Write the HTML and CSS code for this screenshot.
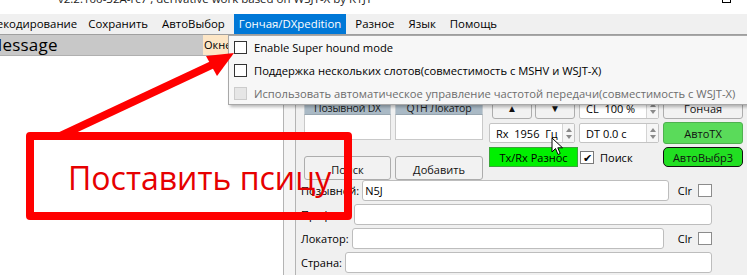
FILE: index.html
```html
<!DOCTYPE html>
<html lang="ru">
<head>
<meta charset="utf-8">
<title>JTDX</title>
<link rel="stylesheet" href="styles.css">
</head>
<body>
<div class="titlebar">
  <span class="title-text">v2.2.100-32A-rc7 , derivative work based on WSJT-X by K1JT</span>
  <span class="max-btn"></span>
</div>
<div class="menubar">
  <span class="mi mi-first">Декодирование</span>
  <span class="mi">Сохранить</span>
  <span class="mi">АвтоВыбор</span>
  <span class="mi mi-active">Гончая/DXpedition</span>
  <span class="mi">Разное</span>
  <span class="mi">Язык</span>
  <span class="mi">Помощь</span>
</div>
<div class="main">
  <div class="leftpane">
    <div class="msg-head">
      <div class="msg-cell"><span class="msg-text">Message</span></div>
      <div class="win-cell">Окне</div>
    </div>
  </div>
  <div class="strip"></div>
  <div class="panel">
    <div class="top">
      <div class="lblock">
        <div class="hdr">Позывной DX</div>
        <div class="hdr">QTH Локатор</div>
        <div class="field"></div>
        <div class="field"></div>
        <div class="btn btn-low">Поиск</div>
        <div class="btn btn-low">Добавить</div>
      </div>
      <div class="rblock">
        <div class="arrows">
          <div class="btn arr">&#9650;</div>
          <div class="btn arr">&#9660;</div>
        </div>
        <div class="spin"><span class="spin-val">CL&nbsp;&nbsp;100 %</span><span class="spin-arr"><i class="up"></i><i class="dn"></i></span></div>
        <div class="btn">Гончая</div>
        <div class="spin spin-r2"><span class="spin-val">Rx&nbsp;&nbsp;1956&nbsp;&nbsp;Гц</span><span class="spin-arr"><i class="up"></i><i class="dn"></i></span></div>
        <div class="spin spin-r2"><span class="spin-val">DT 0.0 с</span><span class="spin-arr"><i class="up"></i><i class="dn"></i></span></div>
        <div class="btn btn-green">АвтоTX</div>
        <div class="btn-bright">Tx/Rx Разнос</div>
        <div class="chk-row"><span class="chk chk-on">&#10004;</span><span>Поиск</span></div>
        <div class="btn btn-auto">АвтоВыбр3</div>
      </div>
    </div>
    <div class="form">
      <div class="frow"><span class="flabel">Позывной:</span><div class="finput">N5J</div><span class="clr">Clr</span><span class="chk"></span></div>
      <div class="frow"><span class="flabel">Префикс:</span><div class="finput"></div></div>
      <div class="frow"><span class="flabel">Локатор:</span><div class="finput finput-short"></div><span class="clr">Clr</span><span class="chk"></span></div>
      <div class="frow"><span class="flabel">Страна:</span><div class="finput"></div></div>
    </div>
  </div>
</div>

<div class="dropdown">
  <div class="ditem"><span class="dchk"></span><span>Enable Super hound mode</span></div>
  <div class="ditem"><span class="dchk"></span><span>Поддержка нескольких слотов(совместимость с MSHV и WSJT-X)</span></div>
  <div class="ditem ditem-off"><span class="dchk"></span><span>Использовать автоматическое управление частотой передачи(совместимость с WSJT-X)</span></div>
</div>

<svg class="cursor" width="14" height="19" viewBox="0 0 14 19">
  <path d="M1 1 L1 15 L4.5 11.5 L7 17.5 L9.2 16.5 L6.8 10.8 L11.5 10.8 Z" fill="#fff" stroke="#000" stroke-width="1" stroke-linejoin="round"/>
</svg>

<svg class="arrow" width="747" height="275" viewBox="0 0 747 275">
  <line x1="60" y1="136" x2="216" y2="63" stroke="#ff0000" stroke-width="8"/>
  <polygon points="234,53 206,56 217,76" fill="#ff0000"/>
</svg>
<div class="callout"><span class="callout-text">Поставить псицу</span></div>
</body>
</html>
```
FILE: styles.css
```css
* { box-sizing: border-box; }
html, body { margin: 0; padding: 0; }
body {
  width: 747px;
  height: 275px;
  overflow: hidden;
  position: relative;
  background: #fff;
  font-family: "Open Sans", "Noto Sans", sans-serif;
  font-size: 11px;
  color: #000;
}
.titlebar {
  height: 14px;
  overflow: hidden;
  display: flex;
  background: #fff;
  padding-left: 58px;
}
.title-text {
  display: block;
  margin-top: -9px;
  line-height: 16px;
  font-size: 11.5px;
  color: #222;
  white-space: nowrap;
}
.max-btn {
  margin-left: auto;
  margin-right: 16px;
  margin-top: -7px;
  width: 9px;
  height: 10px;
  border: 1px solid #000;
}
.menubar {
  height: 21px;
  background: #f0f0f0;
  border-bottom: 1px solid #a0a0a0;
  display: flex;
  white-space: nowrap;
  overflow: hidden;
  font-size: 11.4px;
}
.mi {
  line-height: 20px;
  padding: 0 7px;
}
.mi-first { margin-left: -18px; padding-right: 4px; }
.mi-active {
  background: #0078d7;
  color: #fff;
  padding: 0 5px;
  margin: 0 2px;
}
.main {
  display: flex;
  height: 240px;
}
.leftpane {
  width: 283px;
  background: #fff;
  overflow: hidden;
}
.msg-head {
  display: flex;
  height: 21px;
  border-bottom: 1px solid #b0b0b0;
}
.msg-cell {
  width: 203px;
  background: #c8c8c8;
  overflow: hidden;
}
.msg-text {
  display: block;
  margin-left: -13px;
  font-size: 17px;
  line-height: 20px;
  letter-spacing: 0.2px;
}
.win-cell {
  flex: 1;
  background: #fde6c6;
  line-height: 20px;
  font-size: 11px;
  padding-left: 1px;
}
.strip {
  width: 12px;
  background: #f4f4f4;
  border-left: 1px solid #b4b4b4;
}
.panel {
  flex: 1;
  background: #f0f0f0;
  border-left: 1px solid #b4b4b4;
  padding: 62px 0 0 5px;
}
.top {
  display: flex;
  gap: 6px;
  margin-left: 3px;
}
.lblock {
  display: grid;
  grid-template-columns: 87px 88px;
  grid-template-rows: 18px 25px 40px;
  column-gap: 4px;
  row-gap: 0;
}
.hdr {
  background: #a9b9c5;
  border: 1px solid #c4ccd2;
  border-bottom-color: #98a6b0;
  text-align: center;
  line-height: 15px;
  padding-top: 3px;
  font-size: 10.5px;
  color: #1a1a1a;
  letter-spacing: -0.2px;
}
.field {
  background: #fff;
  border: 1px solid #c9c9c9;
  border-top: none;
}
.btn {
  background: #f2f2f2;
  border: 1px solid #adadad;
  border-radius: 3px;
  display: flex;
  align-items: center;
  justify-content: center;
  font-size: 11px;
  color: #111;
}
.btn-low {
  margin-top: 16px;
  height: 24px;
  align-items: flex-end;
  padding-bottom: 2px;
}
.rblock {
  display: grid;
  grid-template-columns: 86px 80px 80px;
  grid-template-rows: 22px 22px 20px;
  column-gap: 4px;
  row-gap: 3px;
  align-self: flex-start;
}
.arrows {
  display: flex;
  gap: 3px;
  padding-left: 3px;
}
.arr {
  width: 40px;
  font-size: 10px;
}
.spin {
  background: #fff;
  border: 1px solid #c4c4c4;
  border-radius: 2px;
  display: flex;
  align-items: center;
}
.spin-r2 { margin: 1px 0; }
.spin-val {
  flex: 1;
  padding-left: 6px;
  white-space: nowrap;
  font-size: 11px;
}
.spin-arr {
  width: 12px;
  align-self: stretch;
  border-left: 1px solid #d4d4d4;
  display: flex;
  flex-direction: column;
  align-items: center;
  justify-content: center;
  gap: 3px;
  background: #f6f6f6;
}
.up, .dn {
  width: 0;
  height: 0;
  border-left: 3.5px solid transparent;
  border-right: 3.5px solid transparent;
}
.up { border-bottom: 4px solid #8a8a8a; }
.dn { border-top: 4px solid #8a8a8a; }
.btn-green {
  background: #5adb5a;
  border-color: #4fb04f;
}
.btn-bright {
  background: #00f000;
  border: 1px solid #3aa53a;
  margin-right: -3px;
  display: flex;
  align-items: center;
  justify-content: center;
  font-size: 11px;
}
.chk-row {
  display: flex;
  align-items: center;
  gap: 6px;
  padding-left: 1px;
  font-size: 11px;
}
.chk {
  width: 14px;
  height: 13px;
  background: #fff;
  border: 1px solid #8c8c8c;
  display: flex;
  align-items: center;
  justify-content: center;
  font-size: 11px;
  line-height: 1;
  flex: none;
}
.chk-on { border-color: #7a7a7a; }
.btn-auto {
  background: #22df22;
  border: 1px solid #111;
  border-radius: 5px;
}
.form {
  margin-top: 0;
  width: 411px;
  display: flex;
  flex-direction: column;
  gap: 3px;
}
.frow {
  display: flex;
  align-items: center;
  gap: 3px;
  height: 21px;
}
.flabel {
  font-size: 11px;
  white-space: nowrap;
}
.finput {
  flex: 1;
  align-self: stretch;
  background: #fff;
  border: 1px solid #bdbdbd;
  border-radius: 3px;
  padding-left: 2px;
  line-height: 19px;
  font-size: 11px;
}
.finput-short { margin-right: 5px; }
.clr {
  margin-left: 6px;
  margin-right: 3px;
  font-size: 11px;
}
.dropdown {
  position: absolute;
  left: 228px;
  top: 35px;
  width: 540px;
  background: #f7f7f7;
  border: 1px solid #a8a8a8;
  box-shadow: 2px 2px 3px rgba(0,0,0,0.28);
  padding: 0;
}
.ditem {
  height: 23px;
  display: flex;
  align-items: center;
  padding-left: 5px;
  gap: 7px;
  font-size: 11.2px;
  white-space: nowrap;
}
.ditem:last-child { height: 22px; }
.dchk {
  width: 13px;
  height: 13px;
  border: 1px solid #333;
  background: #fff;
  flex: none;
}
.ditem-off { color: #6d6d6d; }
.ditem-off .dchk {
  border-color: #cccccc;
  background: #e6e6e6;
}
.cursor {
  position: absolute;
  left: 551px;
  top: 137px;
}
.arrow {
  position: absolute;
  left: 0;
  top: 0;
  pointer-events: none;
}
.callout {
  position: absolute;
  left: 26px;
  top: 132px;
  width: 326px;
  height: 88px;
  border: 8px solid #ff0000;
  border-radius: 4px;
  padding-left: 34px;
  padding-top: 20px;
}
.callout-text {
  font-family: "Open Sans", "Noto Sans", sans-serif;
  font-size: 32px;
  line-height: 36px;
  color: #e60000;
  white-space: nowrap;
}
```
